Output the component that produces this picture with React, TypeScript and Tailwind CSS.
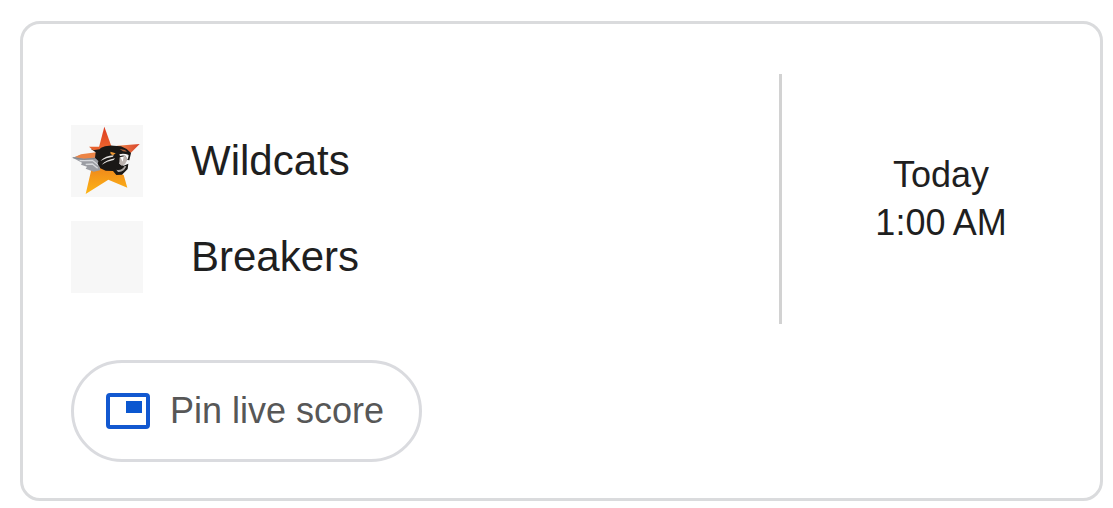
const teams = [
  { name: "Wildcats", hasLogo: true },
  { name: "Breakers", hasLogo: false },
];

const WildcatsLogo = () => {
  return (
    <svg viewBox="0 0 216 216" className="w-full h-full" aria-hidden="true">
      <defs>
        <linearGradient id="star-top" x1="0" y1="0" x2="0" y2="1">
          <stop offset="0" stopColor="#dc3a20" />
          <stop offset="1" stopColor="#ee6a30" />
        </linearGradient>
        <linearGradient id="star-bottom" x1="0" y1="0" x2="0" y2="1">
          <stop offset="0" stopColor="#ef861c" />
          <stop offset="1" stopColor="#fdb515" />
        </linearGradient>
        <linearGradient id="star-right" x1="0" y1="0" x2="1" y2="0">
          <stop offset="0" stopColor="#f08a4c" />
          <stop offset="1" stopColor="#d8432a" />
        </linearGradient>
      </defs>
      {/* star */}
      <path d="M100 5 L122 66 L110 76 L82 74 Z" fill="url(#star-top)" />
      <path d="M138 62 L206 57 L173 90 L160 84 Z" fill="url(#star-right)" />
      <path
        d="M62 130 L120 124 L152 148 L158 150 L169 188 L112 164 L44 207 Z"
        fill="url(#star-bottom)"
      />
      {/* silver wing */}
      <path d="M5 98 L26 91 L78 88 L88 136 L68 140 L44 131 L48 125 L30 119 L33 113 Z" fill="#9b9da3" />
      <path d="M12 96 L30 88 L76 82 L78 97 L40 101 Z" fill="#ec8446" />
      <path
        d="M26 107 L64 106 L82 120 M44 118 L64 117 L80 130"
        stroke="#d6d8dc"
        strokeWidth="4"
        fill="none"
      />
      <path d="M5 98 L38 103 L74 100" stroke="#83858a" strokeWidth="3" fill="none" />
      {/* panther head */}
      <path
        d="M60 72 L86 70 Q104 60 128 62 L150 64 Q168 70 180 84 L175 106 L166 104 L162 92 L150 100 L145 116 L158 122 L172 116 L170 132 L153 149 L136 150 L126 138 L104 137 L88 130 L80 116 L82 108 L72 98 L74 82 Z"
        fill="#1a1816"
      />
      <path d="M54 65 L92 65 L86 73 L66 76 Z" fill="#e8622e" />
      <path d="M146 97 L166 93 L169 104 L162 118 L152 122 L145 116 Z" fill="#bdb4b0" />
      <path d="M118 80 L134 85 L126 91 L119 87 Z" fill="#ee9a36" />
      <path d="M146 72 L162 75 L168 80 L156 79 Z" fill="#a5603c" />
      {/* whiskers */}
      <path d="M88 108 Q104 92 128 91 L126 95 Q106 98 88 108 Z" fill="#e4e2e0" />
      <path d="M92 119 Q106 104 132 100 L128 105 Q108 108 92 119 Z" fill="#e4e2e0" />
      {/* fangs and jaw */}
      <path d="M145 88 Q158 84 173 90 L168 94 Q157 90 147 93 Z" fill="#f6f5f4" />
      <path d="M148 96 L155 110 L158 95 Z M164 92 L170 104 L173 91 Z" fill="#fff" />
      <path d="M136 134 Q152 138 161 123 L166 124 Q158 143 141 141 Z" fill="#aaa5a2" />
    </svg>
  );
};

const PinIcon = () => {
  return (
    <svg viewBox="0 0 44 36" className="w-11 h-9 shrink-0" aria-hidden="true">
      <rect x="2" y="2" width="40" height="32" rx="2" fill="none" stroke="#1258d0" strokeWidth="4" />
      <rect x="20" y="8" width="16" height="12" fill="#0b57d0" />
    </svg>
  );
};

const App = () => {
  return (
    <main className="pt-[21px] pr-2.5 pb-2 pl-5 bg-white font-['Liberation_Sans',Arial,sans-serif] text-[#1f1f1f]">
      <article className="border-[3px] border-[#dadbdd] rounded-[20px] pt-[50px] pb-9">
        <div className="flex min-h-[250px]">
          <ul className="flex flex-col justify-center flex-1 gap-6 pt-5 pl-12">
            {teams.map((team) => (
              <li key={team.name} className="flex items-center gap-12">
                <div className="bg-[#f7f7f7] size-18 shrink-0">
                  {team.hasLogo && <WildcatsLogo />}
                </div>
                <span className="text-[42px] leading-12">{team.name}</span>
              </li>
            ))}
          </ul>
          <div className="flex flex-col items-center justify-center w-[321px] shrink-0 border-l-[3px] border-[#d2d2d2] text-4xl leading-12">
            <span>Today</span>
            <time dateTime="01:00">{"1:00\u202fAM"}</time>
          </div>
        </div>
        <div className="px-12 mt-9">
          <button
            type="button"
            className="flex items-center gap-5 py-6 pl-8 pr-[35px] border-[3px] border-[#dadbdf] rounded-full text-4xl leading-12 text-[#575757] cursor-pointer">
            <PinIcon />
            Pin live score
          </button>
        </div>
      </article>
    </main>
  );
};

export default App;
